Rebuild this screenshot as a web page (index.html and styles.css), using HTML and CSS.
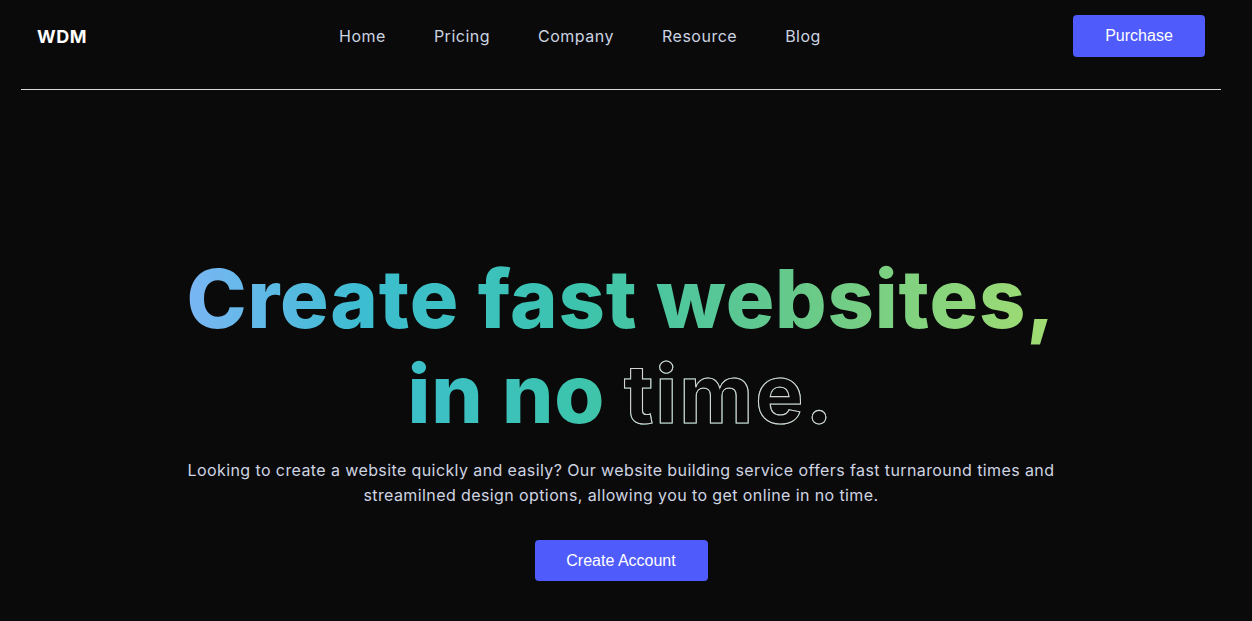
FILE: index.html
```html
<!DOCTYPE html>
<html lang="en">
<head>
<meta charset="utf-8">
<title>WDM</title>
<link rel="stylesheet" href="styles.css">
</head>
<body>
<div class="page">
  <header class="header">
    <a class="logo" href="#">WDM</a>
    <nav class="nav">
      <a href="#">Home</a>
      <a href="#">Pricing</a>
      <a href="#">Company</a>
      <a href="#">Resource</a>
      <a href="#">Blog</a>
    </nav>
    <a class="btn btn-purchase" href="#">Purchase</a>
  </header>
  <main class="hero">
    <h1 class="title">Create fast websites,<br>in no <span class="outline">time.</span></h1>
    <p class="lead">Looking to create a website quickly and easily? Our website building service offers fast turnaround times and streamilned design options, allowing you to get online in no time.</p>
    <a class="btn btn-create" href="#">Create Account</a>
  </main>
</div>
</body>
</html>
```

FILE: styles.css
```css
* { box-sizing: border-box; }
html, body { margin: 0; padding: 0; }
body {
  background: #0a0a0a;
  font-family: "Inter", "Open Sans", sans-serif;
  color: #ffffff;
  height: 621px;
  overflow: hidden;
}
a { text-decoration: none; }
.page {
  width: 1200px;
  margin-left: 21px;
}
.header {
  display: flex;
  align-items: center;
  justify-content: space-between;
  padding: 15px 16px 32px 16px;
  border-bottom: 1px solid #d9d9d9;
}
.logo {
  color: #ffffff;
  font-weight: 700;
  font-size: 18px;
  letter-spacing: 0.5px;
}
.nav {
  display: flex;
  gap: 48px;
}
.nav a {
  color: #ccd3e1;
  font-size: 16px;
  letter-spacing: 0.5px;
}
.btn {
  display: inline-flex;
  align-items: center;
  justify-content: center;
  background: #4f5bfb;
  color: #ffffff;
  border-radius: 4px;
  font-family: "Liberation Sans", Arial, sans-serif;
  font-size: 16px;
}
.btn-purchase {
  width: 132px;
  height: 42px;
  padding-bottom: 1px;
}
.hero {
  display: flex;
  flex-direction: column;
  align-items: center;
  text-align: center;
  padding-top: 162px;
}
.title {
  margin: 0;
  font-size: 81px;
  line-height: 95px;
  font-weight: 800;
  letter-spacing: 0.8px;
  background: linear-gradient(90deg, #7bb6f5 0%, #3dbdd1 20%, #3cc4ad 45%, #66c98a 70%, #a3dd72 100%);
  -webkit-background-clip: text;
  background-clip: text;
  color: transparent;
}
.outline {
  color: #0a0a0a;
  -webkit-text-fill-color: #0a0a0a;
  -webkit-text-stroke: 1.1px #d4d4d4;
  font-weight: 700;
  letter-spacing: 2px;
}
.lead {
  margin: 16px 0 0 0;
  max-width: 900px;
  font-size: 16px;
  line-height: 25px;
  color: #cfd4e2;
  letter-spacing: 0.4px;
}
.btn-create {
  margin-top: 32px;
  width: 173px;
  height: 41px;
}
```
